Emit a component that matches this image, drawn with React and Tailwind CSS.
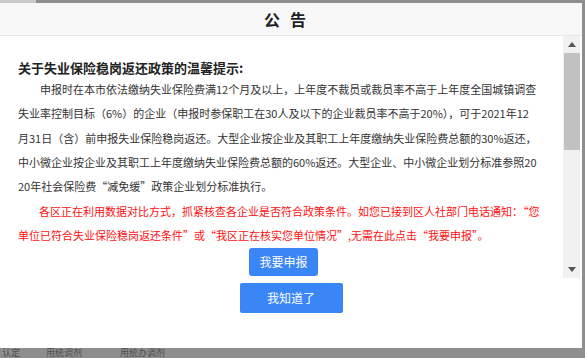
export default function App() {
      return (
            <div className="w-[585px] h-[358px] bg-[#8e8e8e] overflow-hidden flex flex-col font-['Noto_Sans_CJK_SC',sans-serif]">
                  {/* strip of the page behind the overlay */}
                  <div className="h-[3px] flex">
                        <div className="w-[36px] bg-[#c9c9c9]" />
                  </div>

                  <div className="w-[582px] h-[345px] bg-white flex flex-col shrink-0">
                        <div className="h-[33px] bg-[#f8f8f8] border-b border-[#e6e6e6] flex items-center justify-center pr-[12px] gap-[10px] text-[16px] font-bold text-[#222]">
                              <span>公</span>
                              <span>告</span>
                        </div>

                        <div className="h-[242px] flex">
                              <div className="flex-1 overflow-hidden pl-[18px] pt-[23px] text-[11px] leading-[24.33px] text-[#333] whitespace-nowrap">
                                    <h3 className="text-[13px] font-bold leading-[18px] text-[#222]">关于失业保险稳岗返还政策的温馨提示:</h3>
                                    <p className="indent-[22px]">
                                          申报时在本市依法缴纳失业保险费满12个月及以上，上年度不裁员或裁员率不高于上年度全国城镇调查<br />
                                          失业率控制目标（6%）的企业（申报时参保职工在30人及以下的企业裁员率不高于20%），可于2021年12<br />
                                          月31日（含）前申报失业保险稳岗返还。大型企业按企业及其职工上年度缴纳失业保险费总额的30%返还，<br />
                                          中小微企业按企业及其职工上年度缴纳失业保险费总额的60%返还。大型企业、中小微企业划分标准参照20<br />
                                          20年社会保险费“减免缓”政策企业划分标准执行。
                                    </p>
                                    <p className="indent-[21px] text-[#ff1010]">
                                          各区正在利用数据对比方式，抓紧核查各企业是否符合政策条件。如您已接到区人社部门电话通知：“您<br />
                                          单位已符合失业保险稳岗返还条件”或“我区正在核实您单位情况”,无需在此点击“我要申报”。
                                    </p>
                                    <div className="flex justify-center pr-[14px] pt-[1px]">
                                          <button type="button" className="w-[69px] h-[28px] rounded-[3px] bg-[#3b86f6] text-white text-[12px] leading-none">我要申报</button>
                                    </div>
                              </div>

                              {/* scrollbar */}
                              <div className="w-[17px] mr-[2px] bg-[#f1f1f1] flex flex-col">
                                    <div className="h-[17px] flex items-center justify-center">
                                          <svg width="8" height="5" viewBox="0 0 8 5"><path d="M4 0L8 5H0Z" fill="#555" /></svg>
                                    </div>
                                    <div className="h-[97px] ml-[1px] bg-[#c1c1c1]" />
                                    <div className="flex-1" />
                                    <div className="h-[17px] flex items-center justify-center">
                                          <svg width="8" height="5" viewBox="0 0 8 5"><path d="M0 0H8L4 5Z" fill="#555" /></svg>
                                    </div>
                              </div>
                        </div>

                        <div className="flex-1 flex justify-center pt-[5px]">
                              <button type="button" className="w-[103px] h-[30px] rounded-[2px] bg-[#3b86f6] text-white text-[12px] leading-none">我知道了</button>
                        </div>
                  </div>

                  <div className="flex-1 flex gap-[26px] text-[9px] leading-[10px] text-[#4d4d4d] whitespace-nowrap pl-[2px]">
                        <span>认定</span>
                        <span>用统调剂</span>
                        <span className="ml-[12px]">用统办调剂</span>
                  </div>
            </div>
      );
}
